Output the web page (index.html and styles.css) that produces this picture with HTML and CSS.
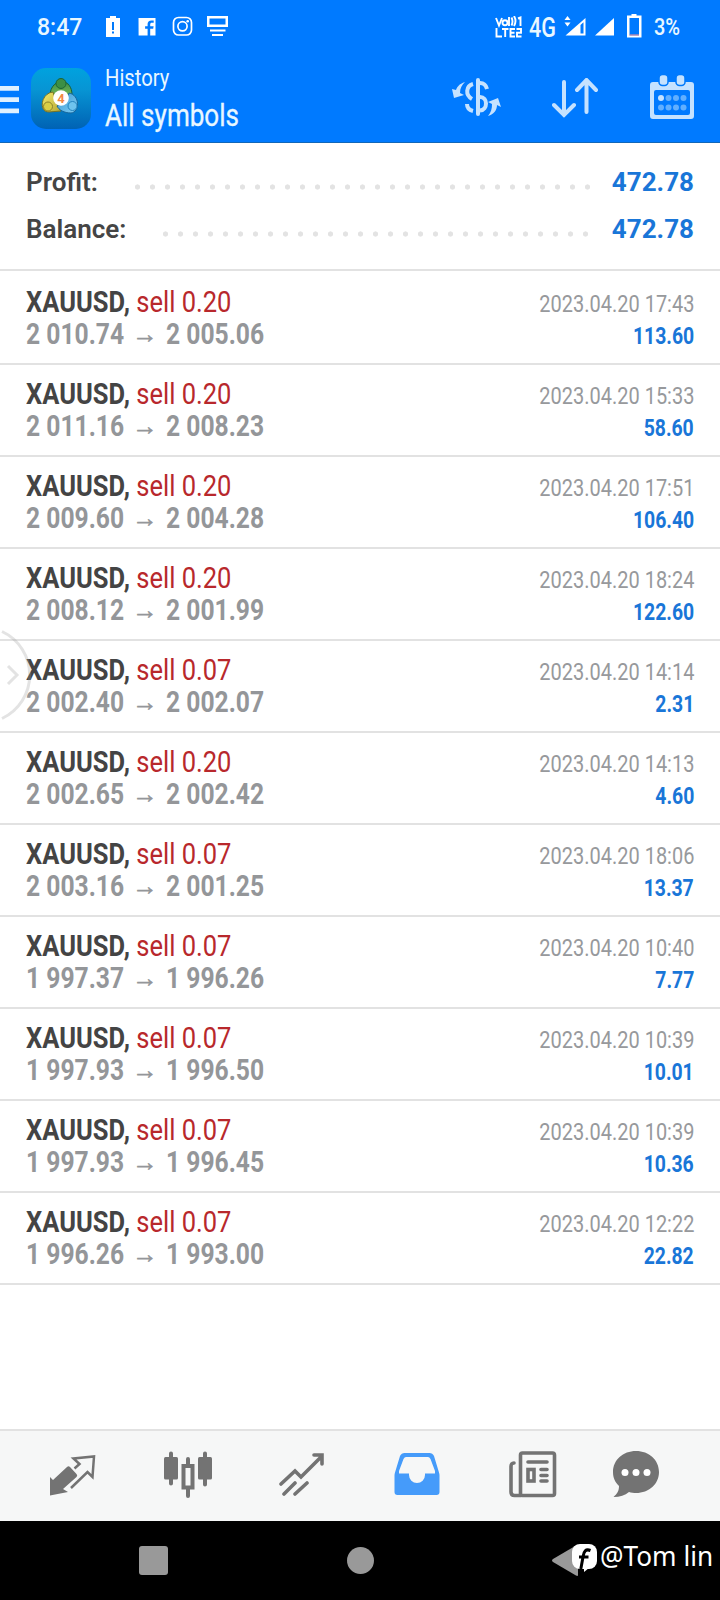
FILE: index.html
```html
<!DOCTYPE html>
<html lang="en">
<head>
<meta charset="utf-8">
<title>History</title>
<link rel="stylesheet" href="styles.css">
</head>
<body>
<div class="screen">
  <header class="top">
    <div class="status">
      <span class="clock">8:47</span>
      <svg class="status-left" width="124" height="24" viewBox="0 0 124 24" fill="#fff">
        <path d="M5 0h6v2h4v19H1V2h4z"/><path d="M7 6h2v8H7zM7 15.500h2v2H7z" fill="#0079fb"/>
        <path d="M33.500 2h17v17.500h-5.300v-6.700h3l.4-2.600h-3.400V8.400c0-1 .5-1.600 1.800-1.600h1.700V4.400h-2.200c-2.600 0-3.900 1.400-3.900 3.700v2.100h-2.500v2.600h2.500v6.700h-9z"/>
        <g fill="none" stroke="#fff" stroke-width="1.700"><rect x="68.500" y="1.500" width="18" height="17.500" rx="5"/><circle cx="77.500" cy="10.300" r="4.600"/></g><circle cx="82.700" cy="5.200" r="1.300"/>
        <path d="M102 0h21v11h-21zM104.500 2.500v6h16v-6z" fill-rule="evenodd"/><path d="M105 13.500h15.500v2H105zM107 18h11v2h-11z"/>
      </svg>
      <svg class="volte" width="27" height="22" viewBox="0 0 27 22" fill="none" stroke="#fff" stroke-width="1.900">
        <path d="M1 2l3 7.500 3-7.500M16.500 1.500q2 4 0 8M19 0q3 5 0 10M14 1v9M23 2.500l2.500-1V10M1.500 12v8.500H7M7 13h6.500M10.200 13v8M20 13h-4.500v7.500H20M15.500 16.700h4M21.500 13h4.500v3.700h-4v3.800h4.500"/><circle cx="10" cy="6.800" r="2.500"/>
      </svg>
      <span class="network">4G</span>
      <svg class="signals" width="82" height="24" viewBox="0 0 82 24" fill="#fff">
        <path d="M2.500 6l3-4 3 4zM2.500 8.500h6l-3 4z"/><path d="M3.500 21.500L23.500 4v17.500zM18.500 11v8.500h3V8.300z" fill-rule="evenodd"/><path d="M33 21.500L52 4v17.500z"/>
        <path d="M69.500 1.500v-1.500h5v1.500h5v22H65v-22zM67.500 4v17.500h9.500V4z" fill-rule="evenodd"/><path d="M67.500 20.500H77v1h-9.500z" fill="#ff8c8c"/>
      </svg>
      <span class="percent">3%</span>
    </div>
    <div class="appbar">
      <svg class="menu" width="19" height="28" viewBox="0 0 19 28" fill="#dff0ff"><path d="M0 0h19v4.800H0zM0 11.200h19v4.800H0zM0 22.400h19v4.800H0z"/></svg>
      <svg class="logo" width="60" height="61" viewBox="0 0 60 61">
        <defs>
          <linearGradient id="tile" x2="0" y2="1"><stop stop-color="#00a2df"/><stop offset=".35" stop-color="#0795d4"/><stop offset="1" stop-color="#0062b4"/></linearGradient>
          <linearGradient id="g" x2="0" y2="1"><stop stop-color="#3c8f45"/><stop offset="1" stop-color="#8ecb62"/></linearGradient>
          <linearGradient id="y" x2="1" y2="1"><stop stop-color="#f4ec6d"/><stop offset="1" stop-color="#b5a634"/></linearGradient>
          <linearGradient id="b" x2="1" y2="1"><stop stop-color="#3c9ad4"/><stop offset="1" stop-color="#7fcdf4"/></linearGradient>
        </defs>
        <rect width="60" height="61" rx="15" fill="url(#tile)"/>
        <g stroke-width="1">
          <path d="M19 28c0-18 22-20 22-1l-5 7H20z" fill="url(#g)" stroke="#185f38"/>
          <path d="M22 24c-12 1-15 20-4 20l12-1-5-9z" fill="url(#y)" stroke="#777225"/>
          <path d="M38 25c11 2 11 19 2 20-7 0-12-3-14-7l8-4z" fill="url(#b)" stroke="#17659a"/>
          <circle cx="30" cy="15.500" r="5" fill="#3c8f45" stroke="#1d6536"/><circle cx="17" cy="38.500" r="4.500" fill="#d8ce45" stroke="#8b812c"/><circle cx="41.500" cy="38" r="4.500" fill="#6ec3ee" stroke="#2383be"/>
        </g>
        <circle cx="30" cy="30" r="7.800" fill="#fff"/>
        <text class="logo-number" x="30" y="34.700" text-anchor="middle">4</text>
      </svg>
      <div class="titles"><span class="section">History</span><span class="filter">All symbols</span></div>
      <div class="actions">
        <svg width="50" height="40" viewBox="0 0 50 40" fill="none" stroke="#c5e2ff" stroke-width="4">
          <path d="M26 2v34" stroke-linecap="round"/><path d="M28 5c3 0 6 2 7 6M21 6c-7 2-8 11-1 15M28 19c8 0 8 13 0 13.500M15 26c0 4 2 6 6 7"/>
          <path d="M13 4C7 6 5 9 4 12L0 11l2 9 10-3-4-2c0-5 2-8 5-11zM36 38c6-2 9-6 9-11l4 2-3-9-10 4 4 2c0 5-1 8-4 12z" fill="#c5e2ff" stroke="none"/>
        </svg>
        <svg width="46" height="40" viewBox="0 0 46 40" fill="none" stroke="#c5e2ff" stroke-width="4" stroke-linecap="round"><path d="M12 4v33M2 27l10 10 10-10M34.500 34V2M25 12L34.500 2 44 12"/></svg>
        <svg width="44" height="46" viewBox="0 0 44 46">
          <path d="M3 8h38q3 0 3 3v31q0 3-3 3H3q-3 0-3-3V11q0-3 3-3zM6 16q-2 0-2 2v21q0 2 2 2h32q2 0 2-2V18q0-2-2-2z" fill="#c5e2ff" fill-rule="evenodd"/>
          <g fill="#c5e2ff" stroke="#0079fb" stroke-width="1.500"><rect x="9" y=".5" width="9" height="11" rx="3.500"/><rect x="26" y=".5" width="9" height="11" rx="3.500"/></g>
          <g fill="#61afff"><circle cx="18.500" cy="24" r="3"/><circle cx="26" cy="24" r="3"/><circle cx="33.500" cy="24" r="3"/><circle cx="11" cy="33.500" r="3"/><circle cx="18.500" cy="33.500" r="3"/><circle cx="26" cy="33.500" r="3"/><circle cx="33.500" cy="33.500" r="3"/></g><circle cx="11" cy="24" r="3" fill="#c5e2ff"/>
        </svg>
      </div>
    </div>
  </header>

  <section class="summary">
    <div class="total"><span>Profit:</span><i class="dots dots-profit"></i><b>472.78</b></div>
    <div class="total"><span>Balance:</span><i class="dots dots-balance"></i><b>472.78</b></div>
  </section>

  <main class="deals">
    <article class="deal"><div class="trade"><p class="name"><b>XAUUSD,</b> sell 0.20</p><p class="prices"><span>2 010.74</span><i>→</i><span>2 005.06</span></p></div><div class="result"><time>2023.04.20 17:43</time><b>113.60</b></div></article>
    <article class="deal"><div class="trade"><p class="name"><b>XAUUSD,</b> sell 0.20</p><p class="prices"><span>2 011.16</span><i>→</i><span>2 008.23</span></p></div><div class="result"><time>2023.04.20 15:33</time><b>58.60</b></div></article>
    <article class="deal"><div class="trade"><p class="name"><b>XAUUSD,</b> sell 0.20</p><p class="prices"><span>2 009.60</span><i>→</i><span>2 004.28</span></p></div><div class="result"><time>2023.04.20 17:51</time><b>106.40</b></div></article>
    <article class="deal"><div class="trade"><p class="name"><b>XAUUSD,</b> sell 0.20</p><p class="prices"><span>2 008.12</span><i>→</i><span>2 001.99</span></p></div><div class="result"><time>2023.04.20 18:24</time><b>122.60</b></div></article>
    <article class="deal"><div class="trade"><p class="name"><b>XAUUSD,</b> sell 0.07</p><p class="prices"><span>2 002.40</span><i>→</i><span>2 002.07</span></p></div><div class="result"><time>2023.04.20 14:14</time><b>2.31</b></div></article>
    <article class="deal"><div class="trade"><p class="name"><b>XAUUSD,</b> sell 0.20</p><p class="prices"><span>2 002.65</span><i>→</i><span>2 002.42</span></p></div><div class="result"><time>2023.04.20 14:13</time><b>4.60</b></div></article>
    <article class="deal"><div class="trade"><p class="name"><b>XAUUSD,</b> sell 0.07</p><p class="prices"><span>2 003.16</span><i>→</i><span>2 001.25</span></p></div><div class="result"><time>2023.04.20 18:06</time><b>13.37</b></div></article>
    <article class="deal"><div class="trade"><p class="name"><b>XAUUSD,</b> sell 0.07</p><p class="prices"><span>1 997.37</span><i>→</i><span>1 996.26</span></p></div><div class="result"><time>2023.04.20 10:40</time><b>7.77</b></div></article>
    <article class="deal"><div class="trade"><p class="name"><b>XAUUSD,</b> sell 0.07</p><p class="prices"><span>1 997.93</span><i>→</i><span>1 996.50</span></p></div><div class="result"><time>2023.04.20 10:39</time><b>10.01</b></div></article>
    <article class="deal"><div class="trade"><p class="name"><b>XAUUSD,</b> sell 0.07</p><p class="prices"><span>1 997.93</span><i>→</i><span>1 996.45</span></p></div><div class="result"><time>2023.04.20 10:39</time><b>10.36</b></div></article>
    <article class="deal"><div class="trade"><p class="name"><b>XAUUSD,</b> sell 0.07</p><p class="prices"><span>1 996.26</span><i>→</i><span>1 993.00</span></p></div><div class="result"><time>2023.04.20 12:22</time><b>22.82</b></div></article>
  </main>

  <nav class="tabs">
    <svg width="46" height="48" viewBox="0 0 46 48" fill="#737373"><path d="M0 26l3 3L17 16q1.500-1.500 3 0l6.500 7q1.500 1.500 0 3L13 38l5 3L0 44.500z"/><path d="M24.500 17.500l5-4.500-6-5.500L44 5.500 42.500 26l-5-5L21 37" fill="none" stroke="#737373" stroke-width="2.500"/></svg>
    <svg width="48" height="48" viewBox="0 0 48 48" fill="#737373"><rect x="0" y="6" width="14" height="22.500" rx="1.500"/><rect x="34" y="6" width="14" height="22.500" rx="1.500"/><path d="M7 2.500v30M41 2.500v31M24 8v5M24 38v7" stroke="#737373" stroke-width="4" stroke-linecap="round"/><rect x="19.500" y="15" width="9" height="21.500" fill="none" stroke="#737373" stroke-width="4"/></svg>
    <svg width="46" height="48" viewBox="0 0 46 48" fill="none" stroke="#737373" stroke-width="3.600" stroke-linecap="round"><path d="M2 33l14-13 6 6L42 6M35 4h8v9M5 43l11-11M16 43l12-11"/></svg>
    <svg width="46" height="48" viewBox="0 0 46 48" fill="#459bfa"><path d="M10.500 2h25q3 0 4.500 3l5 16.500q.5 1.500.5 3V41q0 3-3 3h-39q-3 0-3-3V24.500q0-1.500.5-3L6 5q1.500-3 4.500-3zM12 6q-1.500 0-2.500 2L5 20v2.500h10V24a8 8 0 0 0 16 0v-1.500h10V20L36.500 8q-1-2-2.500-2z" fill-rule="evenodd"/></svg>
    <svg width="48" height="48" viewBox="0 0 48 48" fill="none" stroke="#737373" stroke-width="3.600" stroke-linecap="round"><rect x="11.500" y="2" width="34" height="42.500" rx="2"/><path d="M5 12q-3 0-3 3.500V41q0 3.500 3.500 3.500H12M19 11h19M32 18.500h6M32 24.500h6M32 30h6"/><rect x="19" y="18.500" width="6" height="11.500"/></svg>
    <svg width="46" height="48" viewBox="0 0 46 48" fill="#737373"><path d="M23 0c13 0 23 9 23 21S36 42 23 42c-2 0-5-.4-7-1-4 3.500-9 5-15.500 5C4 43 6 40 6 35 2 31 0 27 0 21 0 9 10 0 23 0z"/><g fill="#fff"><circle cx="12" cy="21.500" r="3.500"/><circle cx="23" cy="21.500" r="3.500"/><circle cx="34" cy="21.500" r="3.500"/></g></svg>
  </nav>

  <footer class="system">
    <svg width="29" height="29"><rect width="29" height="29" rx="3" fill="#999"/></svg>
    <svg width="27" height="27"><circle cx="13.500" cy="13.500" r="13.500" fill="#999"/></svg>
    <svg width="27" height="31" viewBox="0 0 27 31"><path d="M1 14L24 .5q2-1 2 1.500v28q0 1.500-2 .5L1 17q-2-1.500 0-3z" fill="#999"/></svg>
  </footer>

  <div class="credit">
    <svg width="25" height="28" viewBox="0 0 25 28"><rect width="25" height="25" rx="8" fill="#fff"/><path d="M18.500 6.500c-5-2-6.500 1-7.300 5.500L8.800 25M7 13h9.500" fill="none" stroke="#000" stroke-width="3"/><path d="M12 23l5 1-5 4z" fill="#fff"/></svg>
    <span>@Tom lin</span>
  </div>
  <svg class="edge" width="34" height="92" viewBox="0 0 34 92" fill="none" stroke="#999" stroke-opacity=".28"><path d="M2 2.500A48 48 0 0 1 2 89.500" stroke-width="3"/><path d="M8 37l9 9-9 9" stroke-width="3"/></svg>
</div>
</body>
</html>
```

FILE: styles.css
```css
* { box-sizing: border-box; }
body { margin: 0; font-family: Roboto, "Liberation Sans", sans-serif; }
p { margin: 0; }
svg { display: block; flex: none; }
.screen { position: relative; width: 720px; height: 1600px; display: flex; flex-direction: column; background: #fff; overflow: hidden; }

.top { height: 143px; background: #007aff; border-bottom: 1px solid #1267b8; color: #e9f7ff; }
.status { height: 54px; display: flex; align-items: flex-start; padding: 15px 0 0 37px; white-space: nowrap; }
.clock { width: 68px; font-size: 23px; font-weight: 500; line-height: 26px; }
.status-left { margin-top: 1px; }
.volte { margin: 1px 0 0 266px; }
.network { width: 35px; margin-left: 7px; font-size: 28px; font-weight: 500; line-height: 25px; transform: scaleX(.77); transform-origin: left; }
.signals { margin-left: -2px; margin-top: -1px; }
.percent { margin-left: 10px; font-size: 23px; font-weight: 500; line-height: 26px; transform: scaleX(.87); transform-origin: left; }
.appbar { height: 88px; display: flex; align-items: flex-start; }
.menu { margin-top: 32px; }
.logo { margin: 14px 0 0 12px; }
.logo-number { font: bold 13px Roboto, sans-serif; fill: #f38944; }
.titles { width: 361px; display: flex; flex-direction: column; padding-left: 14px; }
.titles span { white-space: nowrap; transform-origin: left; }
.titles .section { margin-top: 10px; font-size: 24px; line-height: 28px; transform: scaleX(.843); }
.titles .filter { margin-top: 4px; font-size: 32px; line-height: 38px; transform: scaleX(.814); -webkit-text-stroke: .3px; }
.actions { display: flex; align-items: flex-start; padding-top: 24px; }
.actions svg:nth-child(2) { margin-left: 50px; }
.actions svg:nth-child(3) { margin: -4px 0 0 52px; }

.summary { height: 128px; padding: 16px 26px 0; border-bottom: 2px solid #e2e2e2; }
.total { height: 47px; display: flex; align-items: center; font-size: 26px; line-height: 47px; color: #454545; font-weight: 600; }
.total b { margin-left: auto; color: #1976d8; font-weight: 700; }
.dots { height: 6px; margin-top: 9px; background: radial-gradient(circle at 2.500px 3px, #e3e3e3 2.300px, transparent 2.900px) 0 0 / 15px 6px repeat-x; }
.total span { width: 109px; }
.total:nth-child(2) span { width: 137px; }
.dots-profit { width: 456px; }
.dots-balance { width: 426px; }

.deals { height: 1158px; }
.deal { height: 92px; display: flex; justify-content: space-between; padding: 13px 26px 0; border-bottom: 2px solid #e2e2e2; }
.deal:first-child { height: 94px; padding-top: 15px; }
.name, .prices { height: 32px; font-size: 29px; line-height: 32px; white-space: nowrap; }
.name { color: #b8282c; transform: scaleX(.88); transform-origin: left; }
.name b { color: #444; }
.prices { display: flex; color: #949699; font-weight: 700; }
.prices span { width: 98px; transform: scaleX(.85); transform-origin: left; }
.prices span:first-child { width: 98px; }
.prices i { width: 42px; padding-left: 10px; font: 400 22px/34px "Liberation Sans", sans-serif; -webkit-text-stroke: .5px; }
.prices { align-items: flex-start; }
.prices span { flex: none; }
.prices i { flex: none; }
.prices i { transform: scale(1.15, 1.15); transform-origin: 21px 19px; }
.result { display: flex; flex-direction: column; align-items: flex-end; padding-top: 2px; white-space: nowrap; }
.result time { font-size: 23.500px; line-height: 32px; color: #97999c; transform: scaleX(.85); transform-origin: right; }
.result b { font-size: 23.500px; line-height: 32px; color: #1976d8; transform: scaleX(.825); transform-origin: right; }

.tabs { height: 92px; display: flex; align-items: flex-start; margin-top: auto; padding: 20px 0 0 50px; background: #f6f7f7; border-top: 2px solid #e2e2e2; }
.tabs svg:nth-child(2) { margin-left: 68px; }
.tabs svg:nth-child(3) { margin-left: 67px; }
.tabs svg:nth-child(4) { margin-left: 69px; }
.tabs svg:nth-child(5) { margin-left: 69px; }
.tabs svg:nth-child(6) { margin-left: 56px; }
.system { height: 79px; display: flex; align-items: center; padding-left: 139px; background: #000; }
.system svg:nth-child(2) { margin-left: 179px; }
.system svg:nth-child(3) { margin-left: 178px; }
.credit { position: absolute; left: 572px; top: 1544px; display: flex; align-items: flex-start; color: #fff; }
.credit span { margin: -4px 0 0 3px; font: 27px/32px "Noto Sans", sans-serif; white-space: nowrap; transform: scaleX(.97); transform-origin: left; }
.edge { position: absolute; left: 0; top: 629px; }
```
